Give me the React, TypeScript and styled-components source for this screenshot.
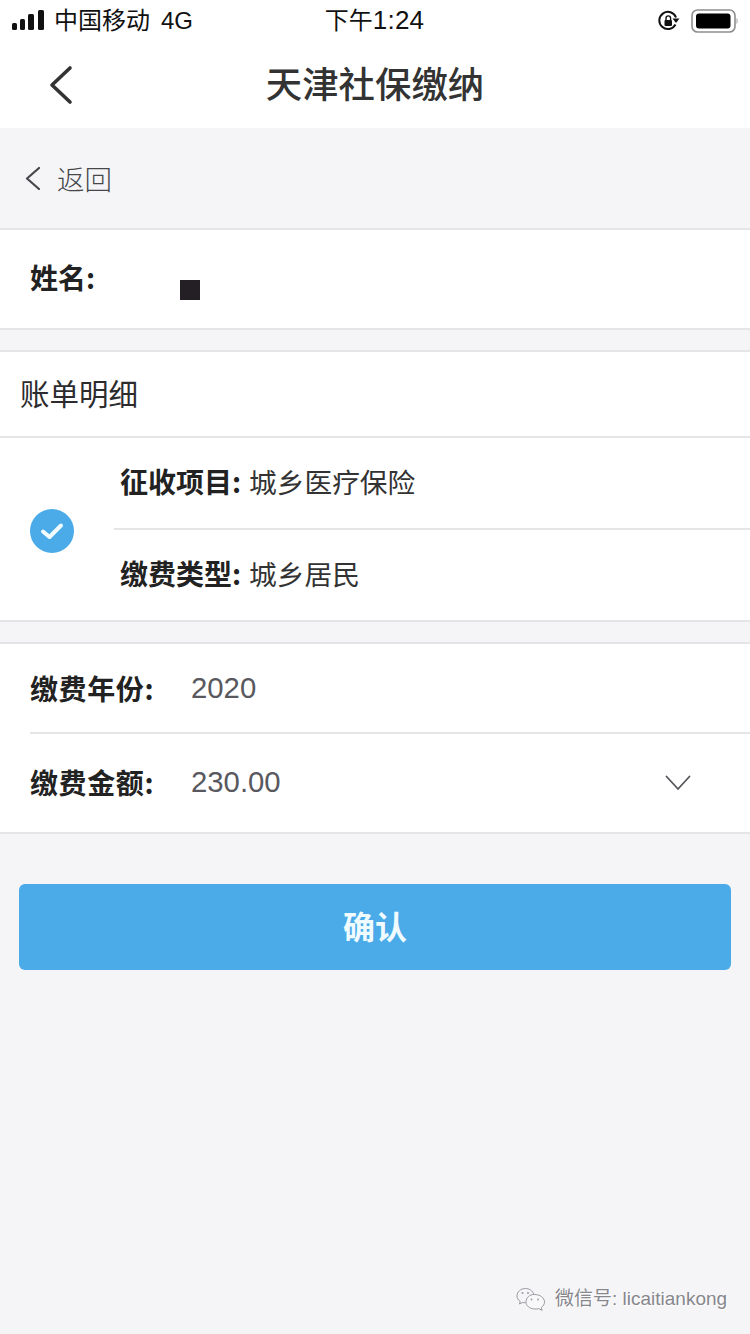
import React from "react";
import styled, { createGlobalStyle } from "styled-components";

const Global = createGlobalStyle`
  html, body { margin: 0; padding: 0; background: #f5f5f8; }
  * { box-sizing: border-box; }
`;

const cjk = `"Liberation Sans", "Noto Sans CJK SC", sans-serif`;

const Page = styled.div`
  position: relative;
  width: 750px;
  height: 1334px;
  overflow: hidden;
  background: #f5f5f8;
  font-family: ${cjk};
`;

const Header = styled.header`
  background: #fff;
  height: 128px;
`;

const StatusBar = styled.div`
  height: 40px;
  padding: 0 11px 0 12px;
  display: grid;
  grid-template-columns: 1fr auto 1fr;
  align-items: center;
  color: #111;
`;

const StatusLeft = styled.div`
  display: flex;
  align-items: center;
  font-size: 24px;
  line-height: 40px;
`;

const Carrier = styled.span`
  margin-left: 9px;
`;

const Network = styled.span`
  margin-left: 11px;
`;

const Clock = styled.div`
  font-size: 26px;
  line-height: 40px;
  margin-right: 2px;
  letter-spacing: 0.2px;
  & > span { font-size: 24px; letter-spacing: 0; }
`;

const StatusRight = styled.div`
  display: flex;
  align-items: center;
  justify-content: flex-end;
  gap: 11px;
`;

const NavBar = styled.div`
  position: relative;
  height: 88px;
  display: flex;
  align-items: center;
  justify-content: center;
`;

const NavBack = styled.svg`
  position: absolute;
  left: 48px;
  top: 25px;
`;

const NavTitle = styled.h1`
  margin: 0 0 4px;
  font-size: 36.4px;
  line-height: 50px;
  font-weight: 500;
  color: #333;
  font-family: "Noto Sans CJK SC", sans-serif;
`;

const BackRow = styled.div`
  height: 100px;
  padding: 0 0 0 25px;
  display: flex;
  align-items: center;
  gap: 16px;
  color: #47474a;
  font-size: 27.5px;
  font-family: "Noto Sans CJK SC", sans-serif;
  font-weight: 300;
`;

const Section = styled.section`
  background: #fff;
  border-top: 2px solid #e5e5e8;
  border-bottom: 2px solid #e5e5e8;
  margin-bottom: ${(p: { $gap?: number }) => p.$gap ?? 20}px;
`;

const NameRow = styled.div`
  height: 98px;
  padding-left: 30px;
  display: flex;
  align-items: flex-start;
  position: relative;
`;

const Bold = styled.span`
  font-family: "Noto Sans CJK SC", sans-serif;
  font-size: 28px;
  line-height: 40px;
  font-weight: 700;
  color: #222;
  white-space: nowrap;
`;

const NameLabel = styled(Bold)`
  margin-top: 27px;
`;

const Redaction = styled.span`
  width: 20px;
  height: 20px;
  margin: 50px 0 0 85px;
  background: #231f24;
`;

const BillTitle = styled.div`
  height: 86px;
  padding: 0 0 5px 20px;
  display: flex;
  align-items: center;
  border-bottom: 2px solid #e5e5e8;
  font-size: 29.5px;
  color: #2c2c2e;
  font-family: "Noto Sans CJK SC", sans-serif;
  font-weight: 400;
`;

const BillBody = styled.div`
  display: flex;
  align-items: center;
  height: 182px;
`;

const CheckWrap = styled.div`
  width: 114px;
  padding: 4px 0 0 30px;
  display: flex;
  align-items: center;
`;

const BillLines = styled.div`
  flex: 1;
  display: flex;
  flex-direction: column;
`;

const BillLine = styled.div<{ $divided?: boolean }>`
  height: ${(p) => (p.$divided ? 92 : 90)}px;
  padding: 0 0 ${(p) => (p.$divided ? 4 : 5)}px 6px;
  display: flex;
  align-items: center;
  gap: 8px;
  ${(p) => (p.$divided ? "border-bottom: 2px solid #e5e5e8;" : "")}
`;

const Value = styled.span`
  font-family: "Noto Sans CJK SC", sans-serif;
  font-size: 27.7px;
  line-height: 40px;
  font-weight: 400;
  color: #333;
  white-space: nowrap;
`;

const FieldRow = styled.div<{ $h: number; $divided?: boolean }>`
  position: relative;
  height: ${(p) => p.$h}px;
  display: flex;
  align-items: center;
  padding-bottom: 3px;
  &::after {
    content: "";
    display: ${(p) => (p.$divided ? "block" : "none")};
    position: absolute;
    left: 30px;
    right: 0;
    bottom: 0;
    height: 2px;
    background: #e5e5e8;
  }
`;

const FieldLabel = styled(Bold)`
  margin-left: 30px;
  width: 161px;
  letter-spacing: 0.6px;
`;

const FieldValue = styled.span`
  font-size: 29.3px;
  color: #58585e;
  flex: 1;
`;

const Chevron = styled.svg`
  margin: 3px 59px 0 0;
`;

const ConfirmButton = styled.button`
  display: block;
  width: 712px;
  height: 86px;
  margin: 50px 0 0 19px;
  padding: 0 0 5px;
  border: 0;
  border-radius: 6px;
  background: #4aabe8;
  color: #f0fbff;
  font-family: "Noto Sans CJK SC", sans-serif;
  font-size: 32px;
  font-weight: 700;
`;

const Watermark = styled.div`
  position: absolute;
  left: 516px;
  top: 1286px;
  display: flex;
  align-items: center;
  gap: 9px;
  font-size: 19px;
  line-height: 26px;
  color: #87878c;
  white-space: nowrap;
  text-shadow: 1px 1px 0 #fff;
`;

const SignalBars = () => (
  <svg width="33" height="21" viewBox="0 0 33 21">
    <rect x="0" y="13" width="5" height="7" rx="1.5" fill="#111" />
    <rect x="8" y="9" width="5" height="11" rx="1.5" fill="#111" />
    <rect x="16" y="4" width="6" height="16" rx="1.5" fill="#111" />
    <rect x="26" y="0" width="6" height="20" rx="1.5" fill="#111" />
  </svg>
);

const RotationLock = () => (
  <svg width="22" height="22" viewBox="0 0 22 22">
    <path d="M17.5 14.5A8.6 8.6 0 1 1 18 7.5" fill="none" stroke="#111" strokeWidth="2" />
    <path d="M14.5 8.5h7l-3.5 4.5z" fill="#111" />
    <rect x="6.5" y="10" width="7.5" height="6" rx="1" fill="#111" />
    <path d="M8 10V8.2a2.3 2.3 0 0 1 4.6 0V10" fill="none" stroke="#111" strokeWidth="1.4" />
  </svg>
);

const Battery = () => (
  <svg width="48" height="24" viewBox="0 0 48 24">
    <rect x="1" y="1" width="43" height="22" rx="5.5" fill="none" stroke="#8e8e8e" strokeWidth="1.6" />
    <rect x="5" y="4.500" width="34.500" height="15" rx="3" fill="#000" />
    <path d="M45.500 9c1.500.6 1.500 5.400 0 6z" fill="#a8a8a8" />
  </svg>
);

const WeChatLogo = () => (
  <svg width="30" height="26" viewBox="0 0 30 26" fill="none" stroke="#9a9a9e" strokeWidth="1">
    <path d="M18 8.500C16.500 4.500 13 2.500 9.500 2.500 4.500 2.500 1 6 1 9.800c0 2.400 1.300 4.300 3.200 5.600L3.500 18l3-1.600c1 .3 2 .5 3 .4" />
    <path d="M18.500 8.500c5.500 0 10 3.300 10 7.500 0 2.200-1.300 4.100-3.200 5.400l.8 3-3.300-1.800c-1.400.4-2.700.5-4.300.4-5-.3-8.500-3.400-8.500-7 0-4.200 3.500-7.500 8-7.500z" fill="#f8f8fa" />
    <circle cx="6.500" cy="7" r="1" fill="#9a9a9e" stroke="none" />
    <circle cx="12" cy="7" r="1" fill="#9a9a9e" stroke="none" />
    <circle cx="15.500" cy="13.500" r=".9" fill="#9a9a9e" stroke="none" />
    <circle cx="22" cy="13.500" r=".9" fill="#9a9a9e" stroke="none" />
  </svg>
);

export default function App() {
  return (
    <Page>
      <Global />
      <Header>
        <StatusBar>
          <StatusLeft>
            <SignalBars />
            <Carrier>中国移动</Carrier>
            <Network>4G</Network>
          </StatusLeft>
          <Clock>
            <span>下午</span>1:24
          </Clock>
          <StatusRight>
            <RotationLock />
            <Battery />
          </StatusRight>
        </StatusBar>
        <NavBar>
          <NavBack width="26" height="40" viewBox="0 0 26 40">
            <path d="M22 3 4 20l18 17" fill="none" stroke="#333" strokeWidth="3.600" strokeLinecap="round" strokeLinejoin="round" />
          </NavBack>
          <NavTitle>天津社保缴纳</NavTitle>
        </NavBar>
      </Header>

      <BackRow>
        <svg width="16" height="24" viewBox="0 0 16 24">
          <path d="M14 2 2 12.500 14 23" fill="none" stroke="#47474a" strokeWidth="2.200" strokeLinecap="round" strokeLinejoin="round" />
        </svg>
        <span>返回</span>
      </BackRow>

      <Section>
        <NameRow>
          <NameLabel>姓名:</NameLabel>
          <Redaction />
        </NameRow>
      </Section>

      <Section>
        <BillTitle>账单明细</BillTitle>
        <BillBody>
          <CheckWrap>
            <svg width="44" height="44" viewBox="0 0 44 44">
              <circle cx="22" cy="22" r="22" fill="#4aabe8" />
              <path d="M13 22.500 19.500 28 31 16.500" fill="none" stroke="#f2fbff" strokeWidth="4" strokeLinecap="round" strokeLinejoin="round" />
            </svg>
          </CheckWrap>
          <BillLines>
            <BillLine $divided>
              <Bold>征收项目:</Bold>
              <Value>城乡医疗保险</Value>
            </BillLine>
            <BillLine>
              <Bold>缴费类型:</Bold>
              <Value>城乡居民</Value>
            </BillLine>
          </BillLines>
        </BillBody>
      </Section>

      <Section $gap={0}>
        <FieldRow $h={90} $divided>
          <FieldLabel>缴费年份:</FieldLabel>
          <FieldValue>2020</FieldValue>
        </FieldRow>
        <FieldRow $h={98}>
          <FieldLabel>缴费金额:</FieldLabel>
          <FieldValue>230.00</FieldValue>
          <Chevron width="26" height="16" viewBox="0 0 26 16">
            <path d="M1.500 1.500 13 14 24.500 1.500" fill="none" stroke="#55555a" strokeWidth="1.800" strokeLinecap="round" strokeLinejoin="round" />
          </Chevron>
        </FieldRow>
      </Section>

      <ConfirmButton>确认</ConfirmButton>

      <Watermark>
        <WeChatLogo />
        <span>微信号: licaitiankong</span>
      </Watermark>
    </Page>
  );
}
